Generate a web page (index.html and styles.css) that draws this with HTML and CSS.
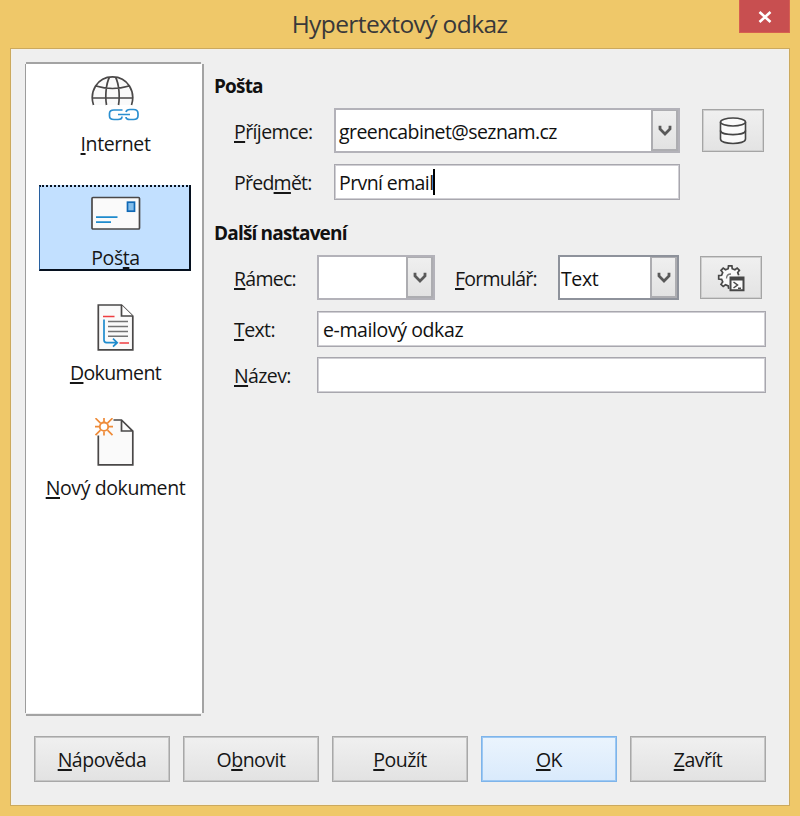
FILE: index.html
```html
<!DOCTYPE html>
<html lang="cs">
<head>
<meta charset="utf-8">
<title>Hypertextový odkaz</title>
<link rel="stylesheet" href="styles.css">
</head>
<body>
<div class="window">
  <header class="titlebar">
    <h1 class="title">Hypertextový odkaz</h1>
    <button class="close" aria-label="Zavřít okno"><svg width="14" height="12" viewBox="0 0 14 12"><path d="M1.500 1L12.500 11M12.500 1L1.500 11" fill="none" stroke="#fff" stroke-width="2.600"/></svg></button>
  </header>
  <main class="client">
    <div class="body">
      <nav class="sidebar">
        <div class="item">
          <svg class="icon" width="52" height="48" viewBox="0 0 52 48" fill="none">
            <path d="M3.500 31C-.8 18 7 3 22.500 3S45.800 18 41.500 31" fill="#fafafa"/>
            <path d="M3.500 31C-.8 18 7 2.800 22.500 2.800S45.800 18 41.500 31M2 24H43M6 12Q22.500 17 39 12M19.500 3C16 10 15 22 16.500 31M25.500 3C29 10 30 22 28.500 31" stroke="#4a4848" stroke-width="1.7"/>
            <path d="M32.500 36H24Q19.500 36 19.500 39.500V42Q19.500 45.500 24 45.500H28Q32 45.500 32 42.500M36 38Q36.500 35.500 40 35.500H43.500Q48 35.500 48 39.500V41.800Q48 45.500 43.500 45.500H40Q36 45.500 36 43M28 40.500H40" stroke="#2a8fd0" stroke-width="1.7"/>
          </svg>
          <span class="label"><u>I</u>nternet</span>
        </div>
        <div class="item selected">
          <svg class="icon" width="52" height="48" viewBox="0 0 52 48" fill="none">
            <rect x="2" y="9.500" width="47.500" height="31.500" rx="1" fill="#fafafa" stroke="#4a4848" stroke-width="1.7"/>
            <path d="M6 29.200H27.500M6 34.200H21" stroke="#1e8bcd" stroke-width="1.700"/>
            <rect x="37.500" y="14.200" width="7" height="9" fill="#83beec" stroke="#0f68b5" stroke-width="1.700"/>
          </svg>
          <span class="label">Poš<u>t</u>a</span>
        </div>
        <div class="item">
          <svg class="icon" width="52" height="48" viewBox="0 0 52 48" fill="none">
            <path d="M8.300 2H31.500L42.800 13.200V46.800H8.300Z" fill="#fafafa" stroke="#4a4848" stroke-width="1.700"/>
            <path d="M31.500 2V13H42.800" fill="#fff" stroke="#4a4848" stroke-width="1.700"/>
            <path d="M18 18.500H38M18 23.500H38M18 28.500H38M18 33.200H38" stroke="#737373" stroke-width="1.500"/>
            <path d="M13 13.500H24.500M29.500 40H39" stroke="#ee3d40" stroke-width="1.700"/>
            <path d="M14 16.500V37Q14 39.500 16.500 39.700H27M23 35.700L27.200 39.700L23 43.700" stroke="#1e8bcd" stroke-width="1.700"/>
          </svg>
          <span class="label tight"><u>D</u>okument</span>
        </div>
        <div class="item">
          <svg class="icon" width="52" height="48" viewBox="0 0 52 48" fill="none">
            <path d="M8.300 17V46.800H42.800V13.200L31.500 2H22L18 12Z" fill="#fafafa"/>
            <path d="M8.300 17.500V46.800H42.800V13.200L31.500 2H23.500M31.500 2V13H42.800" stroke="#4a4848" stroke-width="1.700"/>
            <circle cx="14" cy="8.700" r="4.200" fill="#fff" stroke="#ee8b39" stroke-width="1.800"/>
            <path d="M14 4V0M14 13.500V17.500M9.500 8.700H5M18.500 8.700H23M10.500 5.200L5.500 .2M17.500 5.200L22.500 .2M10.500 12.200L5.500 17.200M17.500 12.200L22.500 17.200" stroke="#ee8b39" stroke-width="1.700"/>
          </svg>
          <span class="label"><u>N</u>ový dokument</span>
        </div>
      </nav>
      <section class="form">
        <h2 class="heading">Pošta</h2>
        <div class="row tall mail">
          <label class="tight"><u>P</u>říjemce:</label>
          <div class="combo"><span class="address">greencabinet@seznam.cz</span><i class="drop"><svg width="14" height="12" viewBox="0 0 14 12"><path d="M2 .8V4L7 9L12 4V.8" fill="none" stroke="#595959" stroke-width="2.800"/></svg></i></div>
          <button class="tool">
            <svg width="30" height="30" viewBox="0 0 30 30" fill="none" stroke="#444" stroke-width="1.600"><path d="M2.500 6V23C2.500 29 27.500 29 27.500 23V6" fill="#fafafa"/><ellipse cx="15" cy="6" rx="12.500" ry="4" fill="#fafafa"/><path d="M2.500 14.500C2.500 20 27.500 20 27.500 14.500"/></svg>
          </button>
        </div>
        <div class="row mail subject">
          <label class="tighter">Před<u>m</u>ět:</label>
          <div class="field first"><span class="tight">První email</span><i class="caret"></i></div>
        </div>
        <h2 class="heading second">Další nastavení</h2>
        <div class="row tall frame">
          <label class="tighter"><u>R</u>ámec:</label>
          <div class="combo"><span></span><i class="drop"><svg width="14" height="12" viewBox="0 0 14 12"><path d="M2 .8V4L7 9L12 4V.8" fill="none" stroke="#595959" stroke-width="2.800"/></svg></i></div>
          <label class="form-label tighter"><u>F</u>ormulář:</label>
          <div class="combo dark"><span>Text</span><i class="drop"><svg width="14" height="12" viewBox="0 0 14 12"><path d="M2 .8V4L7 9L12 4V.8" fill="none" stroke="#595959" stroke-width="2.800"/></svg></i></div>
          <button class="tool">
            <svg width="30" height="30" viewBox="0 0 30 30" fill="none" stroke="#474747" stroke-width="1.700">
              <path d="M11.500 25.500L11 22.600L8.300 21.500L6 23.200L3.800 21L5.500 18.700L4.400 16L1.500 15.700V12.300L4.400 12L5.500 9.300L3.800 7L6 4.800L8.300 6.500L11 5.400L11.300 2.500H14.700L15 5.400L17.700 6.500L20 4.800L22.200 7L20.500 9.300L21.500 12" fill="#fafafa" transform="translate(1.200 .3)"/>
              <path d="M10.500 15.500Q10.500 11 15 11" stroke="#777" stroke-width="1.300"/>
              <path d="M14.500 14.500H27.500V27.300H14.500Z" fill="#fafafa" stroke-width="2"/><path d="M14 16H28" stroke-width="3"/><path d="M17.500 19L21.500 22L17.500 25M22 25.200H25" stroke-width="1.500"/>
            </svg>
          </button>
        </div>
        <div class="row wide">
          <label class="tight"><u>T</u>ext:</label>
          <div class="field"><span>e-mailový odkaz</span></div>
        </div>
        <div class="row wide">
          <label class="tight"><u>N</u>ázev:</label>
          <div class="field"></div>
        </div>
      </section>
    </div>
    <footer class="actions">
      <button><u>N</u>ápověda</button>
      <button>O<u>b</u>novit</button>
      <button><u>P</u>oužít</button>
      <button class="primary"><u>O</u>K</button>
      <button><u>Z</u>avřít</button>
    </footer>
  </main>
</div>
</body>
</html>
```
FILE: styles.css
```css
* { box-sizing: border-box; }
body { margin: 0; font: 19.5px/26px "Open Sans", "Noto Sans", sans-serif; letter-spacing: -0.4px; color: #161616; }
.window { width: 800px; height: 816px; padding: 0 10px 10px; background: #efc869; display: flex; flex-direction: column; }
.titlebar { height: 48px; display: grid; grid-template-columns: 1fr 51px; align-items: start; padding-left: 50px; }
.title { margin: 6px 0 0; font-size: 24.5px; line-height: 36px; font-weight: 400; text-align: center; color: #39383a; letter-spacing: -0.6px; }
.close { width: 51px; height: 33px; background: #c84f50; border: solid #d65f50; border-width: 0 1px 1px; padding: 2px 0 0 1px; display: flex; align-items: center; justify-content: center; }
.client { flex: 1; border: 1px solid #cba95e; background: #efefef; box-shadow: inset 0 0 0 1px #f3f0e8; display: flex; flex-direction: column; }
.body { display: flex; padding: 13px 0 0 14px; height: 668px; }
u { text-decoration: underline; text-decoration-thickness: 1.5px; text-underline-offset: 2px; text-decoration-skip-ink: none; }
span, label { white-space: nowrap; }
.tight { letter-spacing: -0.6px; }
.tighter { letter-spacing: -0.75px; }
.address { letter-spacing: -0.58px; }

.sidebar {
  width: 179px; height: 654px; border: 1px solid transparent; padding: 7px 12px 0 13px; display: flex; flex-direction: column; gap: 28.5px;
  background:
    linear-gradient(#a3a3a3, #a3a3a3) 1px 0 / 175px 2px no-repeat border-box,
    linear-gradient(#a3a3a3, #a3a3a3) 1px 652px / 175px 2px no-repeat border-box,
    linear-gradient(#9c9c9c, #9c9c9c) 0 2px / 1px 649px no-repeat border-box,
    linear-gradient(#a3a3a3, #a3a3a3) 177px 2px / 2px 649px no-repeat border-box,
    linear-gradient(#fff, #fff) 1px 2px / 176px 649px no-repeat border-box;
}
.item { height: 86px; display: flex; flex-direction: column; align-items: center; padding: 2px 0 0 1px; border: 2px solid transparent; }
.item.selected { border: 2px solid #06111f; border-top: 2px dotted #06111f; border-left: 1px solid #2860a0; background: #c2e0ff; padding: 1px 0 0 2px; }
.icon { display: block; flex: none; }
.label { margin-top: 9px; }

.form { flex: 1; padding: 11px 0 0 10px; }
.heading { margin: 0 0 9px; font-size: 19px; line-height: 26px; font-weight: 700; letter-spacing: -0.82px; color: #111; }
.heading.second { margin: 20px 0 9px; }
.row { display: grid; align-items: center; height: 36px; padding-left: 20px; }
.row label { padding-top: 2px; }
.row.tall { height: 45px; }
.row.mail { grid-template-columns: 100px 346px 62px; }
.row.mail .tool { margin-left: 22px; }
.row.subject { margin-top: 11px; }
.row.frame { grid-template-columns: 83px 118px 123px 121px 62px; }
.form-label { margin-left: 20px; }
.row.frame .tool { margin-left: 21px; }
.row.wide { grid-template-columns: 83px 449px; margin-top: 10px; }
.row.frame + .wide { margin-top: 11px; }
.field, .combo { height: 100%; border: 1px solid #a8a7ae; box-shadow: inset 0 0 0 1px #d0cfd4; background: #fff; display: flex; align-items: center; padding-left: 5px; color: #111; }
.field.first { padding-left: 4px; }
.field span, .combo span { padding-top: 2px; }
.combo { justify-content: space-between; padding-left: 3px; border: 2px solid #b3b2b9; box-shadow: none; }
.combo.dark { border-color: #8e929b; padding-left: 1px; }
.drop { width: 27px; height: 100%; border: 2px solid #adadb1; border-width: 1px 2px 2px; background: linear-gradient(#efefef, #e2e2e2); display: flex; align-items: center; justify-content: center; padding-top: 2px; }
.caret { width: 2px; height: 26px; background: #000; }
.tool { width: 62px; height: 43px; padding: 0; border: 1px solid #a5a5a5; box-shadow: inset 0 0 0 1px #cfcfcf; background: linear-gradient(#f0f0f0, #e3e3e3); display: flex; align-items: center; justify-content: center; }

.actions { display: flex; gap: 13px; padding: 19px 0 0 23px; }
.actions button { width: 136px; height: 46px; padding: 2px 0 0; font: inherit; letter-spacing: -0.5px; color: inherit; border: 1px solid #a8a8a8; box-shadow: inset 0 0 0 1px #c6c6c6; background: linear-gradient(#f0f0f0, #e2e2e2); }
.actions .primary { border-color: #7eb4ea; box-shadow: inset 0 0 0 1px #9cc8f3; background: linear-gradient(#ebf4fd, #d9eafc); }
```
